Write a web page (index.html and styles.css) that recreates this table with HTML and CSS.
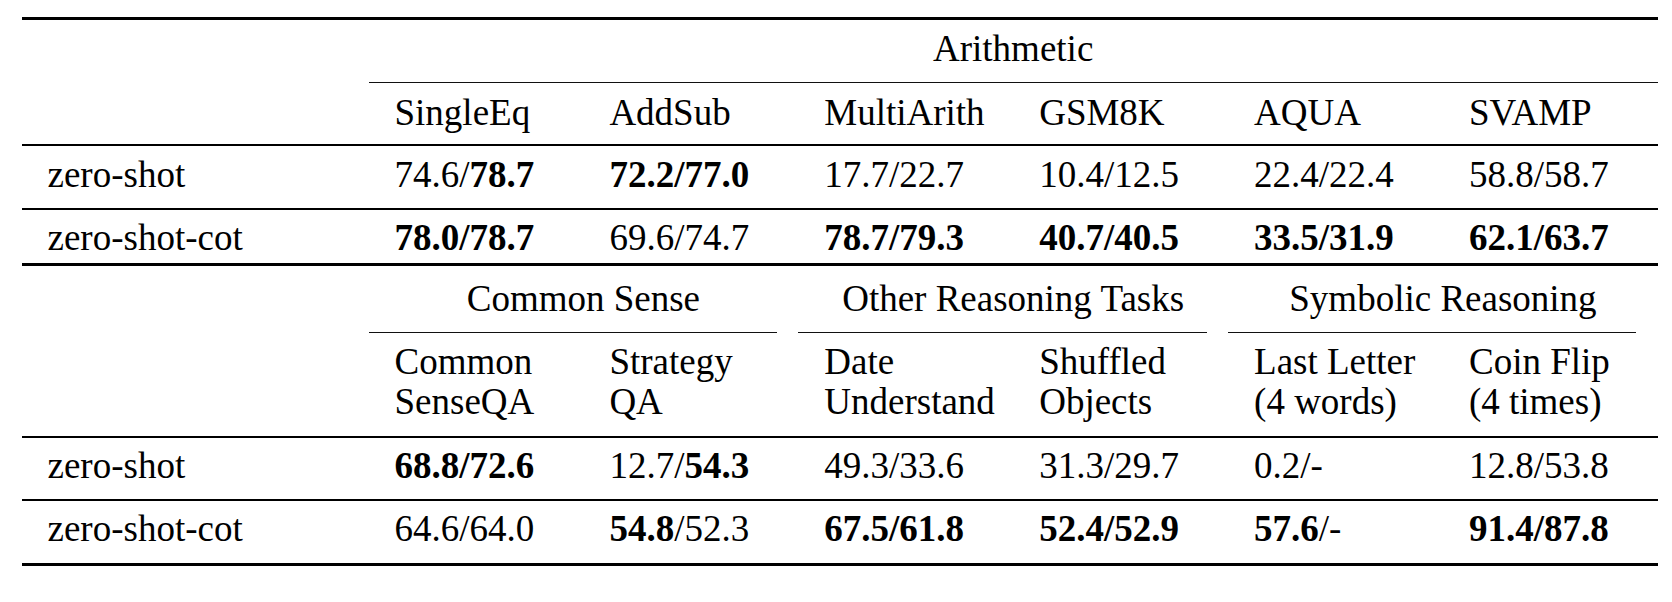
FILE: index.html
```html
<!DOCTYPE html>
<html lang="en">
<head>
<meta charset="utf-8">
<title>Zero-shot vs Zero-shot-CoT</title>
<link rel="stylesheet" href="styles.css">
</head>
<body>
<div class="tbl">
  <div class="rule heavy"></div>

  <div class="row r-group1">
    <div class="cell label"></div>
    <div class="cell group span6">Arithmetic</div>
  </div>

  <div class="row">
    <div class="gap"></div>
    <div class="cmid span6 full"></div>
  </div>

  <div class="row r-head1">
    <div class="cell label"></div>
    <div class="cell">SingleEq</div>
    <div class="cell">AddSub</div>
    <div class="cell">MultiArith</div>
    <div class="cell">GSM8K</div>
    <div class="cell">AQUA</div>
    <div class="cell">SVAMP</div>
  </div>

  <div class="rule light"></div>

  <div class="row r-a1">
    <div class="cell label">zero-shot</div>
    <div class="cell">74.6/<b>78.7</b></div>
    <div class="cell"><b>72.2/77.0</b></div>
    <div class="cell">17.7/22.7</div>
    <div class="cell">10.4/12.5</div>
    <div class="cell">22.4/22.4</div>
    <div class="cell">58.8/58.7</div>
  </div>

  <div class="rule light"></div>

  <div class="row r-a2">
    <div class="cell label">zero-shot-cot</div>
    <div class="cell"><b>78.0/78.7</b></div>
    <div class="cell">69.6/74.7</div>
    <div class="cell"><b>78.7/79.3</b></div>
    <div class="cell"><b>40.7/40.5</b></div>
    <div class="cell"><b>33.5/31.9</b></div>
    <div class="cell"><b>62.1/63.7</b></div>
  </div>

  <div class="rule heavy"></div>

  <div class="row r-group2">
    <div class="cell label"></div>
    <div class="cell group span2">Common Sense</div>
    <div class="cell group span2">Other Reasoning Tasks</div>
    <div class="cell group span2">Symbolic Reasoning</div>
  </div>

  <div class="row">
    <div class="gap"></div>
    <div class="cmid span2 trim"></div>
    <div class="cmid span2 trim"></div>
    <div class="cmid span2 trim"></div>
  </div>

  <div class="row r-head2">
    <div class="cell label"></div>
    <div class="cell">Common<br>SenseQA</div>
    <div class="cell">Strategy<br>QA</div>
    <div class="cell">Date<br>Understand</div>
    <div class="cell">Shuffled<br>Objects</div>
    <div class="cell">Last Letter<br>(4 words)</div>
    <div class="cell">Coin Flip<br>(4 times)</div>
  </div>

  <div class="rule light"></div>

  <div class="row r-b1">
    <div class="cell label">zero-shot</div>
    <div class="cell"><b>68.8/72.6</b></div>
    <div class="cell">12.7/<b>54.3</b></div>
    <div class="cell">49.3/33.6</div>
    <div class="cell">31.3/29.7</div>
    <div class="cell">0.2/-</div>
    <div class="cell">12.8/53.8</div>
  </div>

  <div class="rule light"></div>

  <div class="row r-b2">
    <div class="cell label">zero-shot-cot</div>
    <div class="cell">64.6/64.0</div>
    <div class="cell"><b>54.8</b>/52.3</div>
    <div class="cell"><b>67.5/61.8</b></div>
    <div class="cell"><b>52.4/52.9</b></div>
    <div class="cell"><b>57.6</b>/-</div>
    <div class="cell"><b>91.4/87.8</b></div>
  </div>

  <div class="rule heavy"></div>
</div>
</body>
</html>
```

FILE: styles.css
```css
html, body {
  margin: 0;
  padding: 0;
  background: #ffffff;
}

body {
  padding: 17px 0 0 22px;
  font-family: "Liberation Serif", "Times New Roman", serif;
  font-size: 37px;
  line-height: 40.7px;
  color: #000000;
}

.tbl {
  display: grid;
  width: 1636px;
  grid-template-columns: 346.5px repeat(6, 214.9px);
  grid-template-rows: 3px 62px 1px 61px 2px 62px 2px 53px 3px 66px 1px 103px 2px 61px 2px 62px 3px;
}

.row {
  display: contents;
}

.cell {
  padding-left: 26px;
  white-space: nowrap;
}

.cell.label {
  padding-left: 25.5px;
}

.cell b {
  font-weight: bold;
}

.group {
  padding-left: 0;
  text-align: center;
}

.span6 {
  grid-column: span 6;
}

.span2 {
  grid-column: span 2;
}

.rule {
  grid-column: 1 / -1;
  background: #000000;
}

.cmid {
  background: #111111;
}

.cmid.trim {
  margin-right: 21.5px;
}

/* baseline placement per row */
.r-group1 .cell { padding-top: 8.9px; }
.r-head1 .cell  { padding-top: 10.2px; }
.r-a1 .cell     { padding-top: 9.4px; }
.r-a2 .cell     { padding-top: 7.9px; }
.r-group2 .cell { padding-top: 12.9px; }
.r-head2 .cell  { padding-top: 8.5px; }
.r-b1 .cell     { padding-top: 7.5px; }
.r-b2 .cell     { padding-top: 7.9px; }
```
